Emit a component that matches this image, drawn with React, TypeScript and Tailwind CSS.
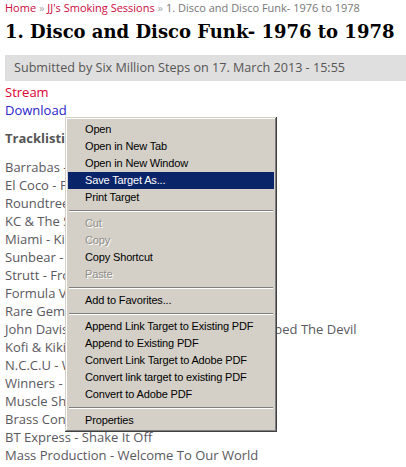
import React from "react";

const tracks = [
	"Barrabas - Woman",
	"El Coco - Fancy Dancer",
	"Roundtree - Get On Up",
	"KC & The Sunshine Band - Boogie Shoes",
	"Miami - Kill That Roach",
	"Sunbear - Dance Dance Dance",
	"Strutt - From Now On",
	"Formula V - Stop Your Loving",
	"Rare Gems Odyssey - Dancin'",
	"John Davis And The Monster Orchestra - Robbed The Devil",
	"Kofi & Kiki - Get Down",
	"N.C.C.U - Working On A Building",
	"Winners - Get Ready",
	"Muscle Shoals Horns - Bump",
	"Brass Construction - Movin'",
	"BT Express - Shake It Off",
	"Mass Production - Welcome To Our World",
];

type Item = { label?: string; disabled?: boolean; active?: boolean; sep?: boolean };

const menu: Item[] = [
	{ label: "Open" },
	{ label: "Open in New Tab" },
	{ label: "Open in New Window" },
	{ label: "Save Target As...", active: true },
	{ label: "Print Target" },
	{ sep: true },
	{ label: "Cut", disabled: true },
	{ label: "Copy", disabled: true },
	{ label: "Copy Shortcut" },
	{ label: "Paste", disabled: true },
	{ sep: true },
	{ label: "Add to Favorites..." },
	{ sep: true },
	{ label: "Append Link Target to Existing PDF" },
	{ label: "Append to Existing PDF" },
	{ label: "Convert Link Target to Adobe PDF" },
	{ label: "Convert link target to existing PDF" },
	{ label: "Convert to Adobe PDF" },
	{ sep: true },
	{ label: "Properties" },
];

const ContextMenu = () => (
	<div className="absolute left-[65px] top-[117px] w-[212px] bg-[#d4d0c8] px-[3px] pt-[4px] pb-[3px] shadow-[inset_-1px_-1px_#404040,inset_1px_1px_#d4d0c8,inset_-2px_-2px_#808080,inset_2px_2px_#ffffff] font-['Liberation_Sans',sans-serif] text-[11px] tracking-[-0.15px]">
		{menu.map((m, i) =>
			m.sep ? (
				<div key={i} className="pt-[4px] pb-[3px] px-[1px]">
					<div className="h-px bg-[#808080]" />
					<div className="h-px bg-white" />
				</div>
			) : (
				<div
					key={i}
					className={
						"h-[17px] leading-[17px] pl-[17px] whitespace-nowrap " +
						(m.active
							? "bg-[#0a246a] text-white"
							: m.disabled
								? "text-[#8f8d88] [text-shadow:1px_1px_#ffffff]"
								: "text-black")
					}
				>
					{m.label}
				</div>
			),
		)}
	</div>
);

export default function App() {
	return (
		<div className="relative w-[406px] h-[467px] overflow-hidden bg-white pl-[5px] font-['Open_Sans',sans-serif]">
			<div className="text-[11px] leading-[16px] text-[#777] whitespace-nowrap">
				<span className="text-[#cc0a3c]">Home</span>
				<span className="text-[#aaa]"> » </span>
				<span className="text-[#cc0a3c]">JJ's Smoking Sessions</span>
				<span className="text-[#aaa]"> » </span>
				1. Disco and Disco Funk- 1976 to 1978
			</div>
			<h1 className="mt-[3px] text-[18px] leading-[26px] font-bold text-black whitespace-nowrap font-['DejaVu_Serif',serif]">
				1. Disco and Disco Funk- 1976 to 1978
			</h1>
			<div className="mt-[10px] h-[26px] bg-[#e0dfdf] pl-[9px] text-[12.6px] leading-[26px] text-[#555] whitespace-nowrap">
				Submitted by Six Million Steps on 17. March 2013 - 15:55
			</div>
			<div className="mt-[2px] text-[13px] leading-[18px]">
				<div className="text-[#dd0033]">Stream</div>
				<div className="text-[#2a1ccc]">Download</div>
			</div>
			<div className="mt-[10px] text-[13px] leading-[18px] font-bold text-[#555]">Tracklisting</div>
			<div className="mt-[11px] text-[13px] leading-[18px] text-[#5a5860] whitespace-nowrap">
				{tracks.map((t) => (
					<div key={t}>{t}</div>
				))}
			</div>
			<ContextMenu />
		</div>
	);
}
